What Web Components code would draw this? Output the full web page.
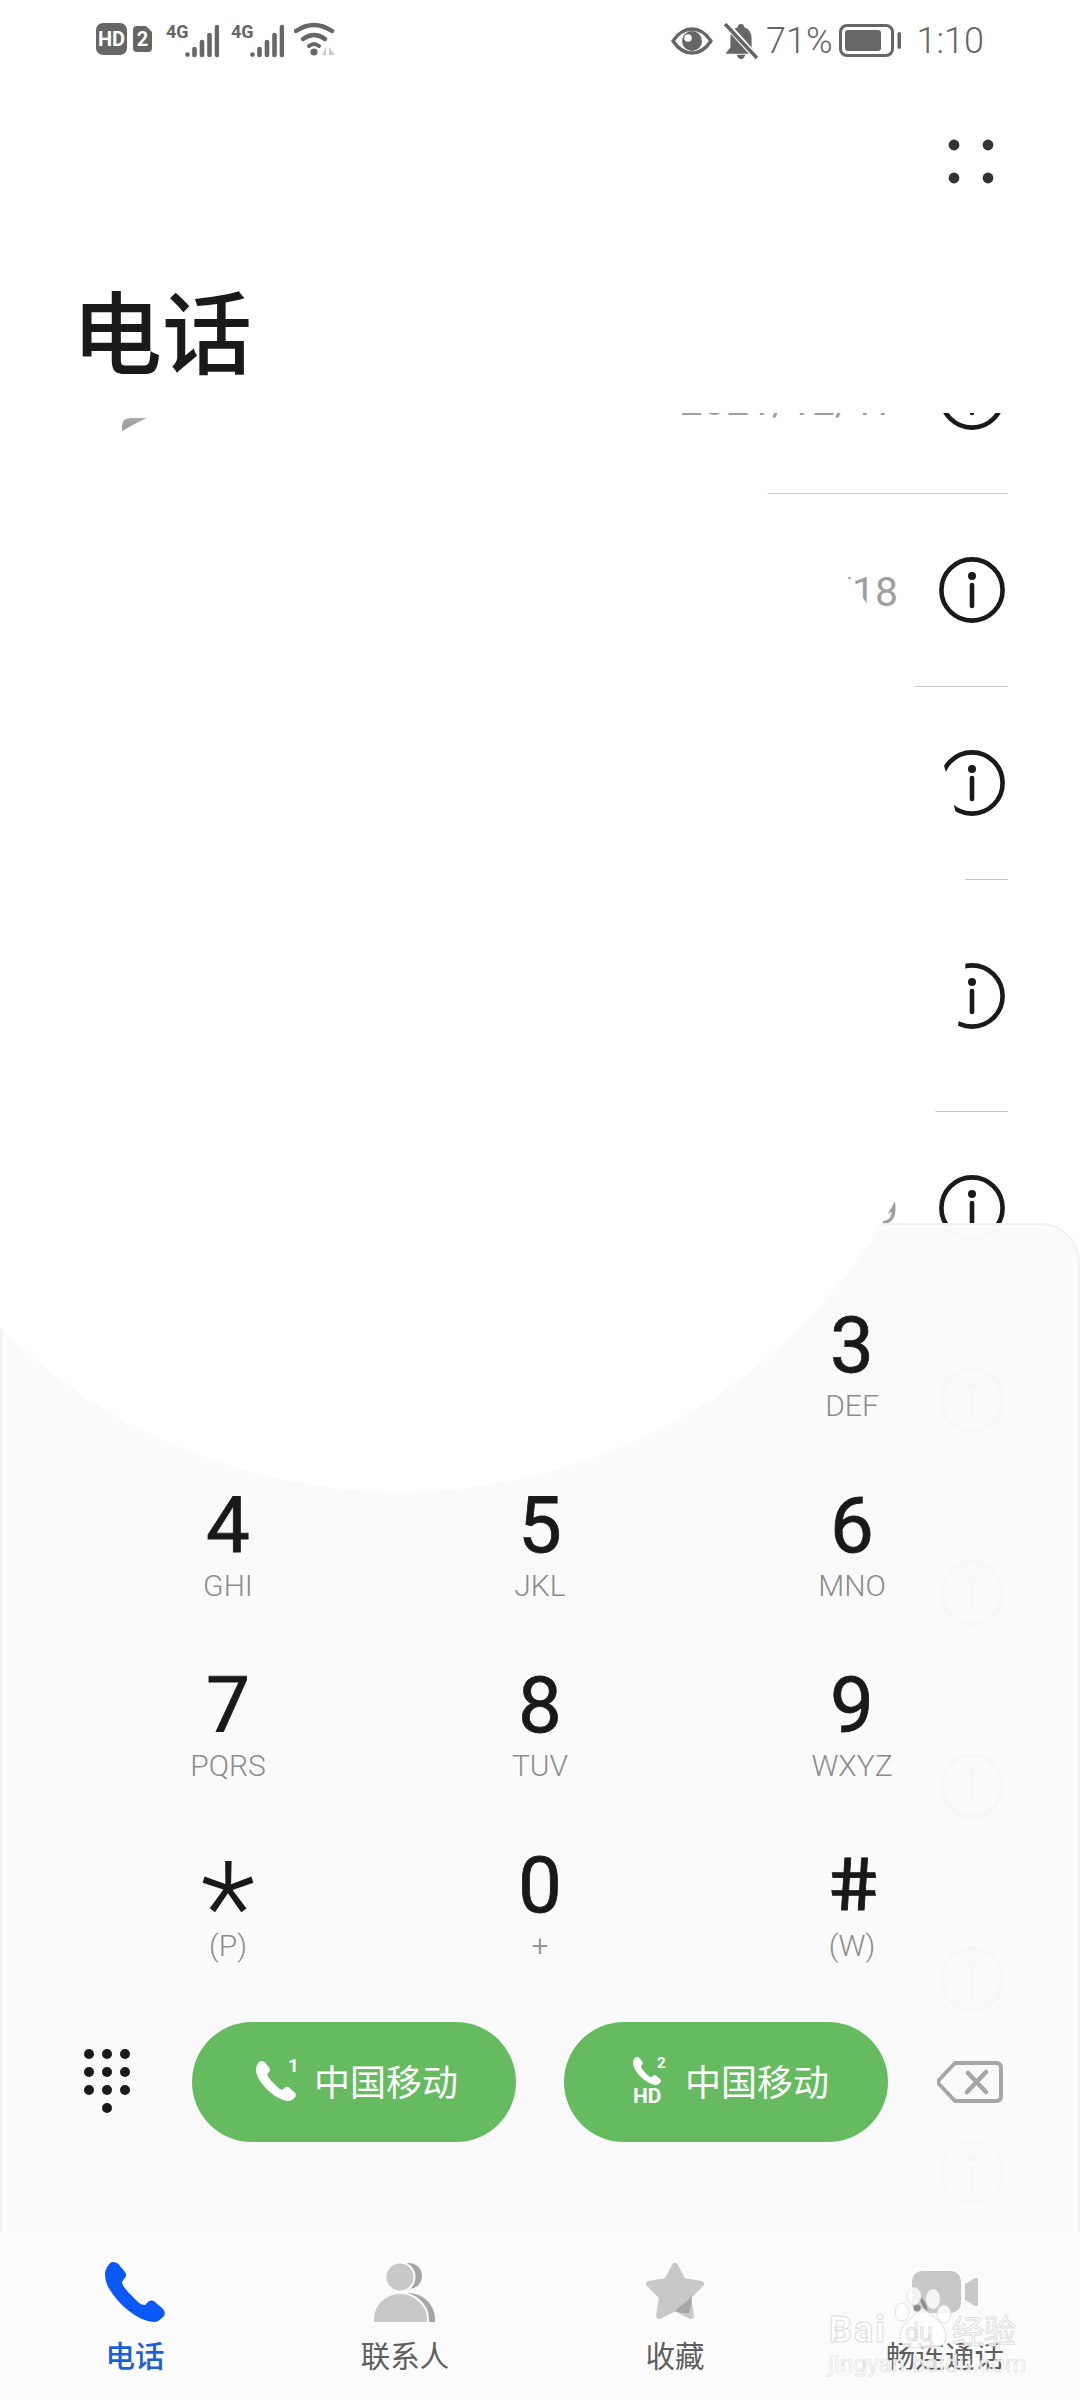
<!DOCTYPE html>
<html lang="zh-CN">
<head>
<meta charset="utf-8">
<title>电话</title>
<style>
  html, body { margin: 0; padding: 0; background: #fff; }
  body { font-family: Roboto, "Noto Sans CJK SC", sans-serif; color: #1a1a1a; }
</style>
</head>
<body>
<app-screen>
  <status-bar slot="status"></status-bar>
  <page-header slot="header">电话</page-header>

  <call-row slot="list" first date="2021/12/17"><span style="display:block;width:34px;height:13px;margin:117px 0 0 42px;border-radius:8px 0 0 0;background:linear-gradient(#aaa,#999)"></span></call-row>
  <call-row slot="list" date="2021/12/18"></call-row>
  <call-row slot="list"></call-row>
  <call-row slot="list" tall></call-row>
  <call-row slot="list" date="2021/12/9" short></call-row>
  <call-row slot="list"></call-row>
  <call-row slot="list"></call-row>
  <call-row slot="list"></call-row>
  <call-row slot="list"></call-row>
  <call-row slot="list"></call-row>

  <dial-pad slot="panel">
    <dial-key></dial-key>
    <dial-key></dial-key>
    <dial-key digit="3" sub="DEF"></dial-key>
    <dial-key digit="4" sub="GHI"></dial-key>
    <dial-key digit="5" sub="JKL"></dial-key>
    <dial-key digit="6" sub="MNO"></dial-key>
    <dial-key digit="7" sub="PQRS"></dial-key>
    <dial-key digit="8" sub="TUV"></dial-key>
    <dial-key digit="9" sub="WXYZ"></dial-key>
    <dial-key digit="*" sub="(P)" star></dial-key>
    <dial-key digit="0" sub="+"></dial-key>
    <dial-key digit="#" sub="(W)" hash></dial-key>
    <call-button slot="first" sim="1">中国移动</call-button>
    <call-button slot="second" sim="2" hd>中国移动</call-button>
  </dial-pad>

  <tab-bar slot="nav">
    <tab-item active label="电话"><svg viewBox="0 0 60 60" width="60" height="60"><path fill="#0a59f7" d="M8 0C11 0 13 1 15 4L20 10C22 13 21 15 19 17L17 20C17 23 21 28 26 33C31 38 35 43 40 43L43 40C45 38 48 38 50 40L57 46C60 49 61 52 58 55C55 58 52 60 49 60C38 60 24 50 16 42C8 33 0 24 0 12C0 8 4 0 8 0Z"/></svg></tab-item>
    <tab-item label="联系人"><svg viewBox="0 0 62 60" width="62" height="60"><circle cx="35" cy="14" r="13" fill="#a6a6a6"/><circle cx="26" cy="15" r="14.5" fill="#c8c8c8" stroke="#fbfbfb" stroke-width="2"/><path fill="#a6a6a6" d="M8 60V57C8 42 20 31 34 31C49 31 61 43 61 57V60Z"/><path fill="#c8c8c8" stroke="#fbfbfb" stroke-width="2" d="M-1 61V57C-1 42 12 31 26 31C41 31 54 43 54 57V61Z"/></svg></tab-item>
    <tab-item label="收藏"><svg viewBox="0 0 60 60" width="60" height="60"><path fill="#c8c8c8" stroke="#c8c8c8" stroke-width="6" stroke-linejoin="round" d="M30 4L38 19L56 22L43 35L46 54L30 46L14 54L17 35L4 22L22 19Z"/><path fill="#a6a6a6" d="M30 49C36 43 42 40 47 34L46 44L44 51L38 51Z"/></svg></tab-item>
    <tab-item label="畅连通话"><svg viewBox="0 0 68 60" width="68" height="60"><rect x="1" y="9" width="49" height="42" rx="10" fill="#c8c8c8"/><path fill="#c8c8c8" d="M54 22L64 16Q67 15 67 18V42Q67 45 64 44L54 38Z"/><circle cx="6" cy="46" r="3.5" fill="#8c8c8c"/><path fill="none" stroke="#8c8c8c" stroke-width="3.5" d="M8 36Q14 40 15 50"/></svg></tab-item>
    <baidu-mark slot="mark"></baidu-mark>
  </tab-bar>
</app-screen>

<script>
  const FONT = 'Roboto, "Noto Sans CJK SC", sans-serif';
  function make(name, html) {
    customElements.define(name, class extends HTMLElement {
      constructor() {
        super();
        const root = this.attachShadow({ mode: 'open' });
        if (typeof html !== 'function') root.innerHTML = html;
      }
      connectedCallback() {
        if (typeof html === 'function') this.shadowRoot.innerHTML = html(this);
      }
    });
  }

  const INFO = `<svg viewBox="0 0 66 66" width="66" height="66"><circle cx="33" cy="33" r="30.6" fill="none" stroke="#1a1a1a" stroke-width="4.6"/><circle cx="33" cy="19" r="4" fill="#1a1a1a"/><path d="M33 28V49" stroke="#1a1a1a" stroke-width="4.6" stroke-linecap="round"/></svg>`;
  const HANDSET = 'M8 0C11 0 13 1 15 4L20 10C22 13 21 15 19 17L17 20C17 23 21 28 26 33C31 38 35 43 40 43L43 40C45 38 48 38 50 40L57 46C60 49 61 52 58 55C55 58 52 60 49 60C38 60 24 50 16 42C8 33 0 24 0 12C0 8 4 0 8 0Z';

  make('app-screen', `
    <style>
      :host { display: flex; flex-direction: column; position: relative; width: 1080px; height: 2400px; overflow: hidden; background: #fff; font-family: ${FONT}; }
      .top { position: relative; z-index: 2; background: #fff; flex: none; }
      .main { flex: 1; min-height: 0; display: grid; grid-template: minmax(0,1fr) / minmax(0,1fr); }
      .list { grid-area: 1 / 1; overflow: hidden; display: flex; flex-direction: column; }
      .panel { grid-area: 1 / 1; align-self: end; }
      .nav { position: relative; z-index: 2; flex: none; }
      .blob { position: absolute; z-index: 1; left: -167px; top: 358px; width: 1134px; height: 1134px; border-radius: 50%; background: #fff; }
    </style>
    <div class="top"><slot name="status"></slot><slot name="header"></slot></div>
    <div class="main">
      <div class="list"><slot name="list"></slot></div>
      <div class="panel"><slot name="panel"></slot></div>
    </div>
    <div class="nav"><slot name="nav"></slot></div>
    <div class="blob"></div>
  `);

  const signal = `<svg viewBox="0 -6 53 40" width="53" height="40">
    <text x="0" y="13" font-family="'Liberation Sans Narrow', Roboto, sans-serif" font-weight="700" font-size="18" fill="#666">4G</text>
    <g stroke="#666" stroke-width="4.6" stroke-linecap="round"><path d="M21.5 29.500V29.600"/><path d="M28.500 24V30"/><path d="M36 17V30"/><path d="M43.500 10V30"/><path d="M51 2V30"/></g>
  </svg>`;

  make('status-bar', `
    <style>
      :host { display: flex; align-items: center; height: 80px; box-sizing: border-box; padding: 0 96px 0 96px; color: #666; }
      .g { display: flex; align-items: center; }
      .l { margin-top: -3px; }
      .r { margin-top: 1px; }
      .sp { flex: 1; }
      .hd { width: 31px; height: 32px; border-radius: 7px; background: #666; color: #fff; font: 700 20px/32px 'Liberation Sans Narrow', Roboto, sans-serif; text-align: center; margin-right: 6px; }
      .sim { position: relative; width: 19px; height: 26px; margin-right: 14px; }
      .sim svg { display: block; }
      .sim span { position: absolute; inset: 0; text-align: center; color: #fff; font: 700 20px/27px 'Liberation Sans Narrow', Roboto, sans-serif; }
      .t { font: 300 36px/60px Roboto, sans-serif; color: #666; }
      svg { display: block; flex: none; }
    </style>
    <div class="g l">
      <div class="hd">HD</div>
      <div class="sim"><svg viewBox="0 0 19 26" width="19" height="26"><path fill="#666" d="M4 0H13L19 6V22Q19 26 15 26H4Q0 26 0 22V4Q0 0 4 0Z"/></svg><span>2</span></div>
      <div style="margin-right:12px">${signal}</div>
      <div style="margin-right:10px">${signal}</div>
      <svg viewBox="0 0 42 34" width="42" height="34">
        <g fill="none" stroke="#666" stroke-width="4.500" stroke-linecap="round"><path d="M2 9Q20 -3 38 9"/><path d="M9 17Q20 9 31 17"/></g>
        <path d="M15 24Q20 20 25 24" fill="none" stroke="#666" stroke-width="4" stroke-linecap="round"/>
        <circle cx="20" cy="30" r="3.600" fill="#666"/>
        <path fill="#ccc" d="M32 25V33H28ZM35 25V33H41Z"/>
      </svg>
    </div>
    <div class="sp"></div>
    <div class="g r">
      <svg viewBox="0 0 42 28" width="42" height="28" style="margin-right:11px">
        <path fill="none" stroke="#666" stroke-width="3.400" stroke-linejoin="round" d="M2 14C8 5 14 2 21 2C28 2 34 5 40 14C34 23 28 26 21 26C14 26 8 23 2 14Z"/>
        <circle cx="21" cy="14" r="10" fill="#666"/><circle cx="17" cy="11" r="3.800" fill="#fff"/>
      </svg>
      <svg viewBox="0 0 32 34" width="34" height="36" style="margin-right:8px">
        <path fill="#666" d="M16 1Q19 1 19 4Q26 6 26 15V23L30 28V29H2V28L6 23V15Q6 6 13 4Q13 1 16 1ZM12 30H20Q19 34 16 34Q13 34 12 30Z"/>
        <path d="M2 1L31 33" stroke="#fff" stroke-width="6"/><path d="M1 1L31 33" stroke="#666" stroke-width="3.400"/>
      </svg>
      <span class="t" style="margin-right:6px">71%</span>
      <svg viewBox="0 0 62 33" width="62" height="33" style="margin-right:16px">
        <rect x="1.500" y="1.500" width="52" height="30" rx="6.500" fill="none" stroke="#666" stroke-width="3"/>
        <rect x="6" y="6" width="36" height="21" rx="3" fill="#666"/>
        <rect x="58.500" y="8" width="3.500" height="17" rx="1.700" fill="#666"/>
      </svg>
      <span class="t">1:10</span>
    </div>
  `);

  make('page-header', `
    <style>
      :host { display: block; height: 333px; box-sizing: border-box; padding-top: 58px; }
      .act { display: flex; justify-content: flex-end; padding-right: 84px; height: 48px; }
      h1 { margin: 101px 0 0 72px; font: 500 90px/100px Roboto, "Noto Sans CJK SC", sans-serif; color: #1a1a1a; }
    </style>
    <div class="act"><svg viewBox="0 0 48 48" width="48" height="48" fill="#333"><circle cx="6" cy="7" r="5.400"/><circle cx="40" cy="7" r="5.400"/><circle cx="6" cy="40" r="5.400"/><circle cx="40" cy="40" r="5.400"/></svg></div>
    <h1><slot></slot></h1>
  `);

  make('call-row', (el) => {
    const date = el.getAttribute('date');
    const first = el.hasAttribute('first');
    const h = el.hasAttribute('tall') ? 232 : el.hasAttribute('short') ? 192 : 193;
    return `
    <style>
      :host { display: flex; flex: none; align-items: center; height: ${h}px; box-sizing: border-box; margin: ${first ? '-112px' : '0'} 72px 0 80px; border-bottom: 1px solid #c9c9c9; font-family: ${FONT}; }
      .left { flex: 1; min-width: 0; align-self: stretch; }
      .date { font-size: 41px; line-height: 48px; color: #9e9e9e; margin: ${first ? 8 : 4}px 41px 0 0; white-space: nowrap; }
      svg { display: block; flex: none; margin-right: 3px; }
    </style>
    <div class="left"><slot></slot></div>
    ${date ? `<div class="date">${date}</div>` : ''}
    ${INFO}`;
  });

  make('dial-key', (el) => {
    const d = el.getAttribute('digit');
    const s = el.getAttribute('sub');
    if (!d) return `<style>:host{display:block;height:180px}</style>`;
    const star = el.hasAttribute('star');
    const hash = el.hasAttribute('hash');
    return `
    <style>
      :host { display: flex; flex-direction: column; align-items: center; height: 180px; box-sizing: border-box; padding-top: 21px; font-family: Roboto, sans-serif; }
      .d { height: 84px; font-size: ${star ? 128 : 78}px; font-weight: ${star ? 300 : 400}; -webkit-text-stroke: ${star ? 0 : '.8px'} #191919; line-height: 84px; color: #191919; ${star ? 'transform: translateY(22px);' : ''} ${hash ? 'transform: skewX(9deg) scale(1.08,.94);' : ''} }
      .s { font-size: 30px; font-weight: 300; line-height: 36px; color: #8c8c8c; }
    </style>
    <div class="d">${d}</div>
    <div class="s">${s}</div>`;
  });

  make('dial-pad', `
    <style>
      :host { display: block; height: 1009px; box-sizing: border-box; padding-top: 60px; border-radius: 40px 40px 0 0; background: rgba(250,250,250,.99); box-shadow: inset 2px 0 0 #f1f1f1, inset -2px 0 0 #f1f1f1, inset 0 2px 0 #f1f1f1; }
      .grid { display: grid; grid-template-columns: repeat(3, 1fr); padding: 0 72px; }
      .act { display: flex; align-items: center; margin-top: 19px; padding-left: 84px; height: 120px; }
      .pad { margin: 6px 61px 0 0; flex: none; display: block; }
      .gap { width: 48px; flex: none; }
      .bk { margin: -1px 0 0 49px; flex: none; display: block; }
    </style>
    <div class="grid"><slot></slot></div>
    <div class="act">
      <svg class="pad" viewBox="0 0 47 72" width="47" height="72" fill="#1a1a1a">
        <circle cx="5" cy="5" r="5"/><circle cx="23" cy="5" r="5"/><circle cx="41" cy="5" r="5"/>
        <circle cx="5" cy="23" r="5"/><circle cx="23" cy="23" r="5"/><circle cx="41" cy="23" r="5"/>
        <circle cx="5" cy="41" r="5"/><circle cx="23" cy="41" r="5"/><circle cx="41" cy="41" r="5"/>
        <circle cx="23" cy="59" r="5"/>
      </svg>
      <slot name="first"></slot>
      <div class="gap"></div>
      <slot name="second"></slot>
      <svg class="bk" viewBox="0 0 66 42" width="66" height="42" fill="none" stroke="#a6a6a6" stroke-width="4" stroke-linejoin="round" stroke-linecap="round">
        <path d="M18 2H59Q64 2 64 7V35Q64 40 59 40H18L2 23Q0 21 2 19Z"/>
        <path d="M30 31L49 11M31 12L49 31" stroke-width="4.500"/>
      </svg>
    </div>
  `);

  make('call-button', (el) => {
    const hd = el.hasAttribute('hd');
    const sim = el.getAttribute('sim');
    const narrow = `'Liberation Sans Narrow', Roboto, sans-serif`;
    const icon = hd ? `
      <div class="ic" style="width:30px;margin:-2px 22px 0 10px;">
        <svg viewBox="0 0 60 60" width="28" height="28" style="display:block"><path fill="#fff" d="${HANDSET}"/></svg>
        <span class="n" style="left:24px;top:-3px;font-size:15px;">${sim}</span>
        <div style="font:700 21px/17px ${narrow};color:#fff;margin-top:3px;">HD</div>
      </div>` : `
      <div class="ic" style="width:40px;margin:-2px 18px 0 6px;">
        <svg viewBox="0 0 60 60" width="40" height="40" style="display:block"><path fill="#fff" d="${HANDSET}"/></svg>
        <span class="n" style="left:32px;top:-4px;font-size:19px;">${sim}</span>
      </div>`;
    return `
    <style>
      :host { display: flex; flex: none; align-items: center; justify-content: center; width: 324px; height: 120px; border-radius: 60px; background: #66bb61; color: #fff; font-family: ${FONT}; }
      .ic { position: relative; flex: none; }
      .n { position: absolute; color: #fff; font-family: ${narrow}; font-weight: 700; line-height: 18px; }
      .t { font-size: 36px; line-height: 40px; margin-top: 3px; }
    </style>
    ${icon}<span class="t"><slot></slot></span>`;
  });

  make('tab-bar', `
    <style>
      :host { display: grid; grid-template-columns: repeat(4, 1fr); position: relative; height: 168px; background: #fbfbfb; font-family: ${FONT}; }
    </style>
    <slot></slot><slot name="mark"></slot>
  `);

  make('tab-item', (el) => `
    <style>
      :host { display: flex; flex-direction: column; align-items: center; padding-top: 30px; }
      .i { height: 60px; }
      .i ::slotted(svg) { display: block; }
      .l { margin-top: 15px; font-size: 29.5px; line-height: 40px; font-weight: ${el.hasAttribute('active') ? 500 : 400}; color: ${el.hasAttribute('active') ? '#1a5fd6' : '#5e5e5e'}; white-space: nowrap; }
    </style>
    <div class="i"><slot></slot></div>
    <div class="l">${el.getAttribute('label')}</div>
  `);

  make('baidu-mark', `
    <style>
      :host { position: absolute; left: 826px; top: 50px; width: 210px; height: 112px; font-family: Roboto, "Noto Sans CJK SC", sans-serif; color: rgba(255,255,255,.85); -webkit-text-stroke: 1px #dedede; }
      .paw { position: absolute; left: 60px; top: 4px; }
      .bai { position: absolute; left: 3px; top: 26px; font: 700 36px/44px Roboto, sans-serif; letter-spacing: 2px; }
      .du { position: absolute; left: 79px; top: 36px; font: 400 25px/30px Roboto, sans-serif; }
      .jy { position: absolute; left: 126px; top: 25px; font: 400 32px/44px "Noto Sans CJK SC", sans-serif; }
      .url { position: absolute; left: 2px; top: 67px; font: 400 24px/30px Roboto, sans-serif; white-space: nowrap; -webkit-text-stroke: .6px #dcdcdc; letter-spacing: .2px; }
    </style>
    <svg class="paw" viewBox="0 0 70 70" width="70" height="70" fill="rgba(255,255,255,.82)" stroke="#dedede" stroke-width="1">
      <ellipse cx="28" cy="10" rx="7" ry="9"/><ellipse cx="47" cy="13" rx="7" ry="10"/>
      <ellipse cx="16" cy="26" rx="7" ry="9"/><ellipse cx="58" cy="28" rx="7" ry="9"/>
      <path d="M37 22C46 30 60 38 60 51C60 62 48 63 37 61C26 63 14 62 14 51C14 38 28 30 37 22Z"/>
    </svg>
    <span class="bai">Bai</span><span class="du">du</span><span class="jy">经验</span>
    <span class="url">jingyan.baidu.com</span>
  `);
</script>
</body>
</html>
